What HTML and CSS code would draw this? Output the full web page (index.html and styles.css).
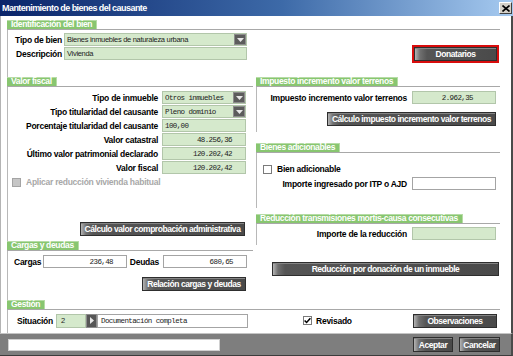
FILE: index.html
```html
<!DOCTYPE html>
<html lang="es">
<head>
<meta charset="utf-8">
<title>Mantenimiento de bienes del causante</title>
<link rel="stylesheet" href="styles.css">
</head>
<body>
<div class="window">
  <div class="titlebar">
    <span class="title">Mantenimiento de bienes del causante</span>
    <span class="close"><svg width="8" height="7" viewBox="0 0 8 7"><path d="M0.5 0.5L7.5 6.5M7.5 0.5L0.5 6.5" stroke="#000" stroke-width="1.6"/></svg></span>
  </div>
  <div class="main">
    <section class="frame">
      <div class="frame-head"><span class="tab">Identificación del bien</span></div>
      <div class="frame-body ident-body">
        <div class="ident-form">
          <span class="lbl">Tipo de bien</span>
          <div class="field green combo prop"><span class="val">Bienes inmuebles de naturaleza urbana</span><span class="drop"><svg width="7" height="4" viewBox="0 0 7 4"><path d="M0 0H7L3.5 4Z" fill="#e8e8e8"/></svg></span></div>
          <span class="lbl">Descripción</span>
          <div class="field green prop"><span class="val">Vivienda</span></div>
        </div>
        <div class="focus-ring"><button class="btn donatarios">Donatarios</button></div>
      </div>
    </section>

    <div class="columns">
      <div class="col">
        <section class="frame">
          <div class="frame-head"><span class="tab">Valor fiscal</span></div>
          <div class="frame-body vf-body">
            <div class="form">
              <span class="lbl">Tipo de inmueble</span>
              <div class="field green combo"><span class="val">Otros inmuebles</span><span class="drop"><svg width="7" height="4" viewBox="0 0 7 4"><path d="M0 0H7L3.5 4Z" fill="#e8e8e8"/></svg></span></div>
              <span class="lbl">Tipo titularidad del causante</span>
              <div class="field green combo"><span class="val">Pleno dominio</span><span class="drop"><svg width="7" height="4" viewBox="0 0 7 4"><path d="M0 0H7L3.5 4Z" fill="#e8e8e8"/></svg></span></div>
              <span class="lbl">Porcentaje titularidad del causante</span>
              <div class="field green"><span class="val">100,00</span></div>
              <span class="lbl">Valor catastral</span>
              <div class="field green num">48.256,36</div>
              <span class="lbl">Último valor patrimonial declarado</span>
              <div class="field green num">120.202,42</div>
              <span class="lbl">Valor fiscal</span>
              <div class="field green num">120.202,42</div>
            </div>
            <div class="check disabled vf-check"><span class="box"></span><span class="check-lbl">Aplicar reducción vivienda habitual</span></div>
            <button class="btn btn-calc-vf">Cálculo valor comprobación administrativa</button>
          </div>
        </section>

        <section class="frame">
          <div class="frame-head"><span class="tab">Cargas y deudas</span></div>
          <div class="frame-body cd-body">
            <div class="cd-row">
              <span class="lbl-left">Cargas</span>
              <div class="field num">236,48</div>
              <span class="lbl">Deudas</span>
              <div class="field num">680,65</div>
            </div>
            <button class="btn btn-rel">Relación cargas y deudas</button>
          </div>
        </section>
      </div>

      <div class="col">
        <section class="frame frame-imp">
          <div class="frame-head"><span class="tab">Impuesto incremento valor terrenos</span></div>
          <div class="frame-body imp-body">
            <div class="form form-right">
              <span class="lbl">Impuesto incremento valor terrenos</span>
              <div class="field green num num-wide">2.962,35</div>
            </div>
            <button class="btn btn-calc-imp">Cálculo impuesto incremento valor terrenos</button>
          </div>
        </section>

        <section class="frame frame-ba">
          <div class="frame-head"><span class="tab">Bienes adicionables</span></div>
          <div class="frame-body ba-body">
            <div class="check ba-check"><span class="box"></span><span class="check-lbl">Bien adicionable</span></div>
            <div class="form form-right">
              <span class="lbl">Importe ingresado por ITP o AJD</span>
              <div class="field"></div>
            </div>
          </div>
        </section>

        <section class="frame">
          <div class="frame-head"><span class="tab">Reducción transmisiones mortis-causa consecutivas</span></div>
          <div class="frame-body red-body">
            <div class="form form-right">
              <span class="lbl">Importe de la reducción</span>
              <div class="field green"></div>
            </div>
          </div>
        </section>

        <button class="btn btn-don">Reducción por donación de un inmueble</button>
      </div>
    </div>

    <section class="frame">
      <div class="frame-head"><span class="tab">Gestión</span></div>
      <div class="frame-body ges-body">
        <span class="lbl-left">Situación</span>
        <div class="sit-group">
          <div class="field green prop sit-code">2</div>
          <span class="sit-arrow"><svg width="4" height="7" viewBox="0 0 4 7"><path d="M0 0L4 3.5L0 7Z" fill="#e8e8e8"/></svg></span>
          <div class="field sit-text">Documentación completa</div>
        </div>
        <div class="check rev-check"><span class="box"><svg width="7" height="7" viewBox="0 0 7 7"><path d="M0.6 3.4L2.6 5.5L6.4 1.2" stroke="#000" stroke-width="1.5" fill="none"/></svg></span><span class="check-lbl">Revisado</span></div>
        <button class="btn btn-obs">Observaciones</button>
      </div>
    </section>
  </div>

  <div class="statusbar">
    <div class="status-field"></div>
    <button class="btn btn-ok">Aceptar</button>
    <button class="btn btn-cancel">Cancelar</button>
  </div>
</div>
</body>
</html>
```

FILE: styles.css
```css
* { box-sizing: border-box; }
html, body { margin: 0; padding: 0; }
body {
  width: 513px;
  height: 356px;
  overflow: hidden;
  background: #fff;
  font-family: "Liberation Sans", Arial, sans-serif;
  font-size: 8.5px;
  letter-spacing: -0.25px;
  font-weight: bold;
  color: #000;
}
.window {
  width: 513px;
  height: 356px;
  display: flex;
  flex-direction: column;
  background: #fff;
}
.titlebar {
  height: 16px;
  flex: none;
  display: flex;
  align-items: center;
  padding: 0 1px 0 2px;
  background: linear-gradient(to right, #0a246a 0%, #3d6aa8 55%, #a6caf0 100%);
  color: #fff;
}
.title { flex: 1; font-size: 9px; letter-spacing: -0.55px; font-weight: bold; white-space: nowrap; }
.close {
  width: 13px;
  height: 12px;
  background: #d4d0c8;
  border: 1px solid;
  border-color: #fff #404040 #404040 #fff;
  display: flex;
  align-items: center;
  justify-content: center;
}
.main {
  flex: 1;
  display: flex;
  flex-direction: column;
  padding: 4px 11px 0 6px;
  border-left: 1px solid #b4b4b4;
  border-right: 2px solid #4a4a4a;
}

/* frames */
.frame { display: flex; flex-direction: column; }
.frame-head {
  display: flex;
  height: 10px;
  flex: none;
  border-bottom: 1px solid #a8a8a8;
}
.tab {
  height: 9px;
  line-height: 9px;
  padding: 0 5px 0 4px;
  background: #88c670;
  color: #fff;
  letter-spacing: -0.35px;
  white-space: nowrap;
  box-shadow: inset 0 1px #b6dca6, inset -1px 0 #b6dca6;
}
.frame-body { border-left: 1px solid #b8b8b8; display: flex; flex-direction: column; }

.lbl { text-align: right; white-space: nowrap; }
.lbl-left { white-space: nowrap; }

/* fields */
.field {
  height: 13px;
  border: 1px solid #a4a4a4;
  background: #fff;
  display: flex;
  align-items: center;
  padding: 0 2px;
  font-family: "Liberation Mono", "DejaVu Sans Mono", monospace;
  font-weight: normal;
  font-size: 7.5px;
  letter-spacing: -0.6px;
  color: #1c1c1c;
  white-space: nowrap;
  overflow: hidden;
}
.field.green { background: #d5e9cc; border-color: #b2c6aa; }
.field.prop {
  font-family: "Liberation Sans", Arial, sans-serif;
  font-size: 7.5px;
  letter-spacing: -0.3px;
}
.field.num { justify-content: flex-end; padding-right: 13px; }
.field.num-wide { padding-right: 22px; }
.combo { padding-right: 0; }
.combo .val { flex: 1; overflow: hidden; }
.drop {
  width: 12px;
  height: 11px;
  background: #5c5c5c;
  border: 1px solid #8c8c8c;
  display: flex;
  align-items: center;
  justify-content: center;
}

/* buttons */
.btn {
  appearance: none;
  margin: 0;
  height: 14px;
  padding: 0 3px;
  border: 1px solid #2e2e2e;
  background: linear-gradient(to right, #b4b4b4 0, #707070 5px, #555 12px, #4a4a4a 100%);
  box-shadow: inset 0 1px #858585;
  color: #fff;
  font-family: "Liberation Sans", Arial, sans-serif;
  font-size: 8.5px;
  letter-spacing: -0.45px;
  font-weight: bold;
  line-height: 12px;
  white-space: nowrap;
  text-align: center;
}

/* checkbox */
.check { display: flex; align-items: center; gap: 5px; height: 10px; }
.box {
  width: 9px;
  height: 9px;
  border: 1px solid #7a7a7a;
  background: #fff;
  display: flex;
  align-items: center;
  justify-content: center;
}
.check.disabled .box { background: #c6c6c6; border-color: #a4a4a4; }
.check.disabled .check-lbl { color: #a8a8a8; }

/* identificación */
.ident-body { flex-direction: row; height: 47px; }
.ident-form {
  display: grid;
  grid-template-columns: 54px 183px;
  column-gap: 2px;
  row-gap: 1px;
  align-items: center;
  align-content: start;
  padding-top: 3px;
}
.focus-ring {
  margin: 15px 1px 0 auto;
  align-self: flex-start;
  border: 2px solid #d80c0c;
  width: 87px;
  height: 18px;
}
.donatarios { width: 83px; height: 14px; }

/* columns */
.columns {
  display: grid;
  grid-template-columns: 246px 244px;
  column-gap: 3px;
  height: 223px;
}
.col { display: flex; flex-direction: column; }

.form {
  display: grid;
  grid-template-columns: 1fr 84px;
  column-gap: 4px;
  row-gap: 1px;
  align-items: center;
  padding-right: 7px;
}
.form-right { padding-right: 4px; column-gap: 5px; }

.vf-body { height: 154px; padding: 4px 0 5px 0; }
.vf-check { margin: 3px 0 0 4px; }
.btn-calc-vf { width: 165px; margin: auto 8px 0 auto; }

.cd-body { height: 49px; padding-top: 4px; }
.cd-row {
  display: grid;
  grid-template-columns: 29px 84px 36px 84px;
  align-items: center;
  padding-left: 6px;
}
.cd-row .lbl { padding-right: 4px; }
.btn-rel { width: 104px; margin: 9px 7px 0 auto; }

.frame-imp { margin-bottom: 11px; }
.imp-body { height: 45px; padding-top: 4px; }
.btn-calc-imp { width: 169px; margin: 8px 4px 0 auto; }

.frame-ba { margin-bottom: 6px; }
.ba-body { height: 55px; padding-top: 11px; }
.ba-check { margin-left: 6px; }
.ba-body .form { margin-top: 3px; }

.red-body { height: 21px; padding-top: 3px; }

.btn-don { width: 227px; margin: 17px 1px 0 auto; }

/* gestión */
.ges-body {
  height: 23px;
  flex-direction: row;
  align-items: center;
  padding: 0 0 2px 9px;
}
.sit-group { display: flex; margin-left: 3px; height: 14px; }
.sit-group .field { height: 14px; }
.sit-code { width: 30px; padding-left: 4px; }
.sit-arrow {
  width: 11px;
  height: 14px;
  background: #565656;
  border: 1px solid #8c8c8c;
  display: flex;
  align-items: center;
  justify-content: center;
}
.sit-text { width: 151px; padding-left: 3px; }
.rev-check { margin-left: 55px; gap: 4px; }
.btn-obs { width: 84px; margin: 0 3px 0 auto; }

/* status bar */
.statusbar {
  height: 23px;
  flex: none;
  display: flex;
  align-items: center;
  padding: 0 11px 0 8px;
  background: #7e7e7e;
  border-top: 1px solid #c4c4c4;
  border-bottom: 1px solid #3c3c3c;
  border-right: 2px solid #4a4a4a;
}
.status-field { width: 212px; height: 12px; background: #fff; border: 1px solid #d0d0d0; }
.btn-ok { width: 40px; height: 15px; margin-left: auto; }
.btn-cancel { width: 41px; height: 15px; margin-left: 6px; }
```
